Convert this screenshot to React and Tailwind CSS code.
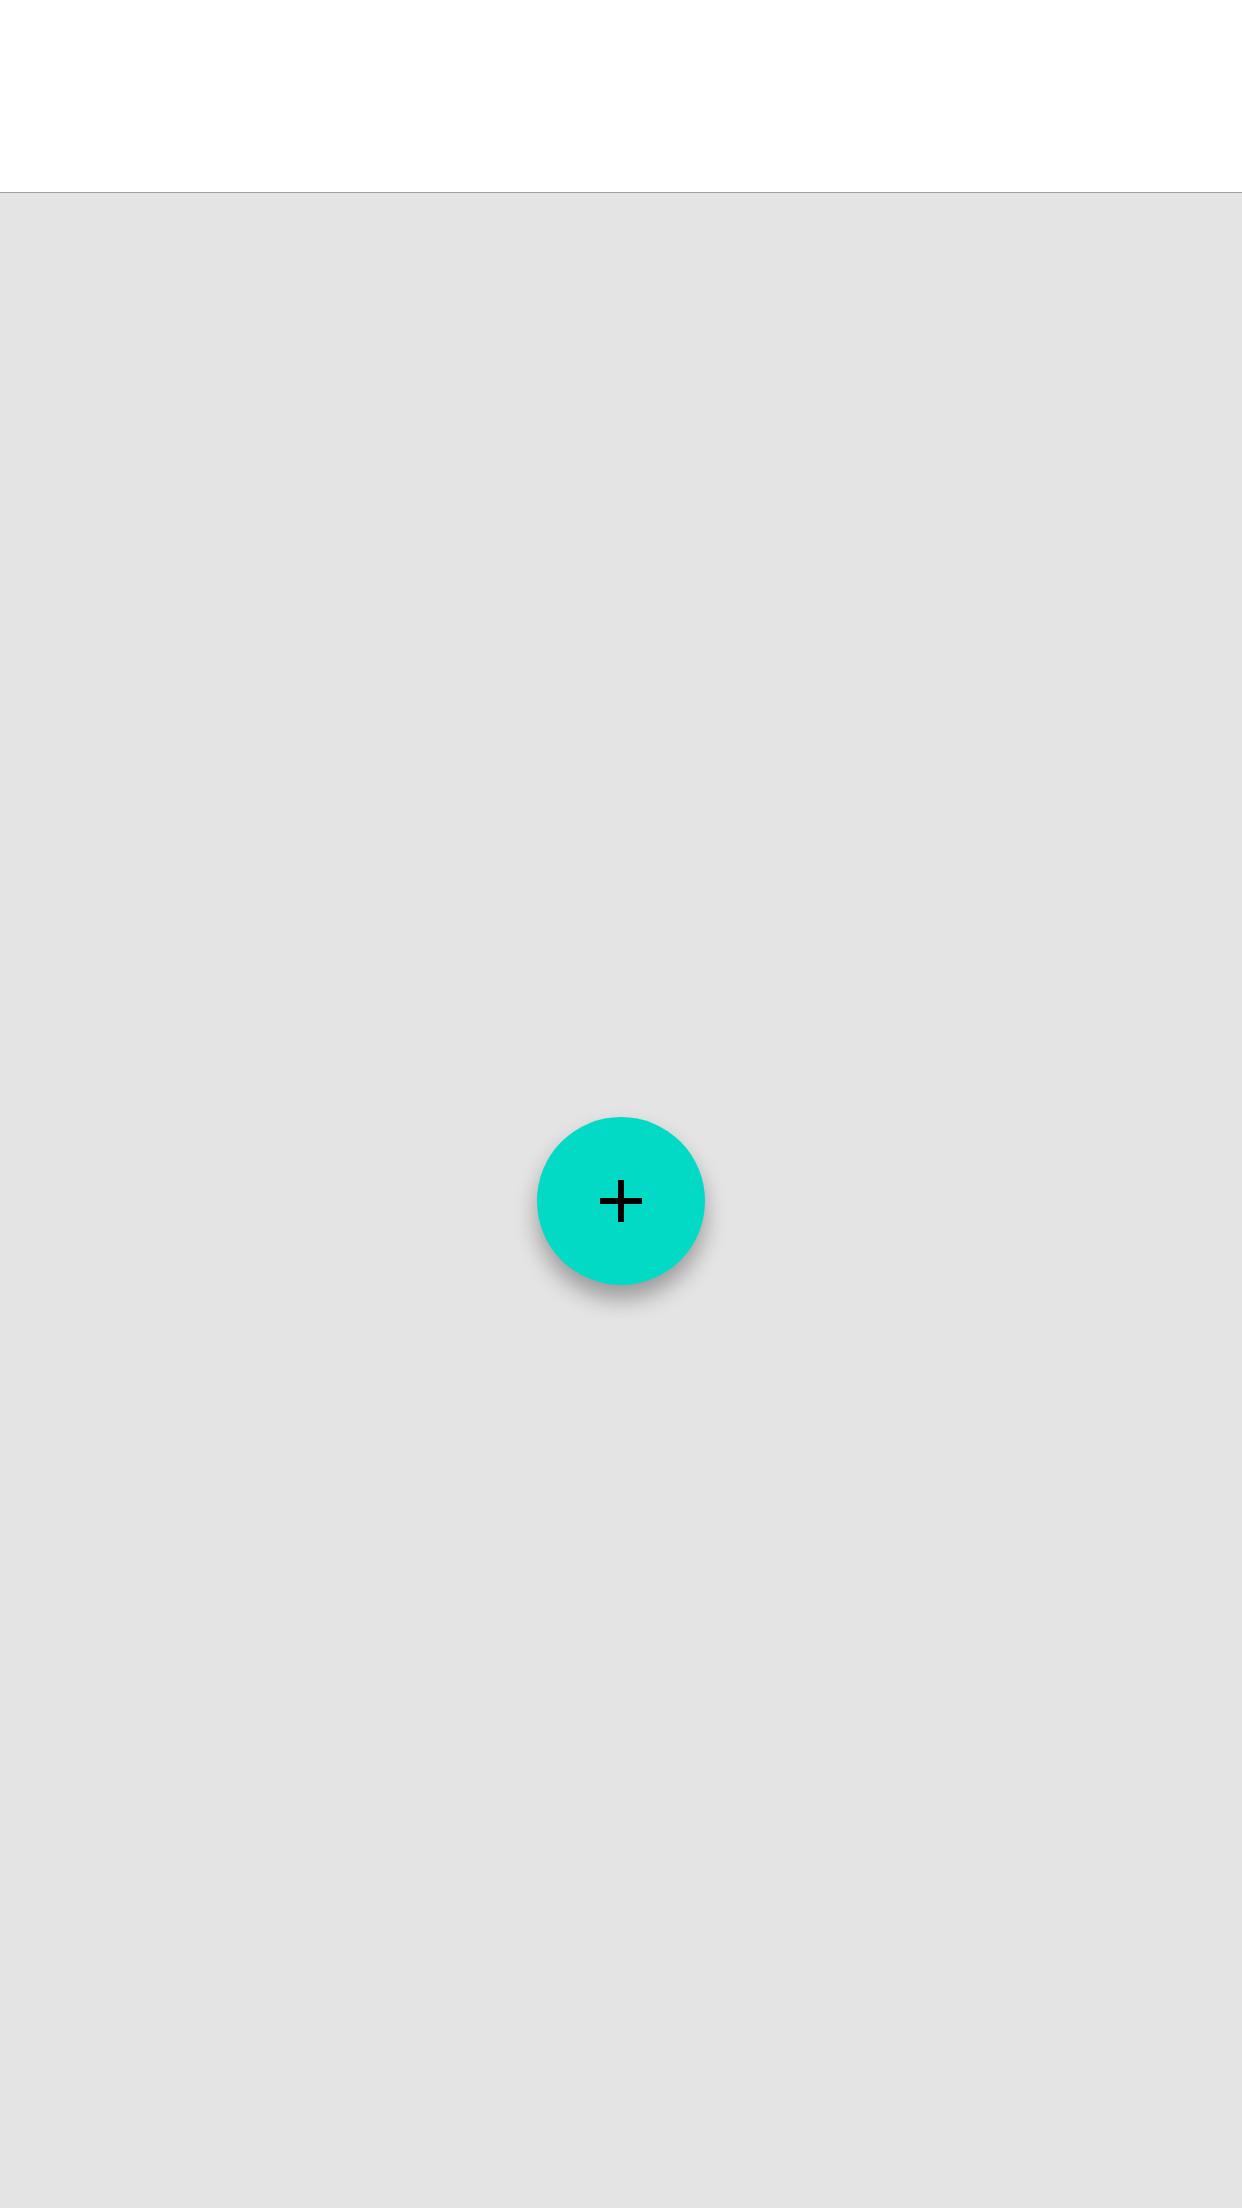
export default function App() {
  return (
    <div className="w-[1242px] h-[2208px] flex flex-col bg-[#e4e4e4] font-['Roboto',sans-serif]">
      <div className="h-[193px] bg-white border-b border-[#a0a0a0] shrink-0" />
      <div className="flex-1 flex items-center justify-center">
        <button className="w-[168px] h-[168px] rounded-full bg-[#03dac6] flex items-center justify-center shadow-[0_14px_22px_rgba(0,0,0,0.32)]">
          <svg width="42" height="42" viewBox="0 0 42 42">
            <rect x="0" y="18" width="42" height="6" fill="#000" />
            <rect x="18" y="0" width="6" height="42" fill="#000" />
          </svg>
        </button>
      </div>
    </div>
  );
}
